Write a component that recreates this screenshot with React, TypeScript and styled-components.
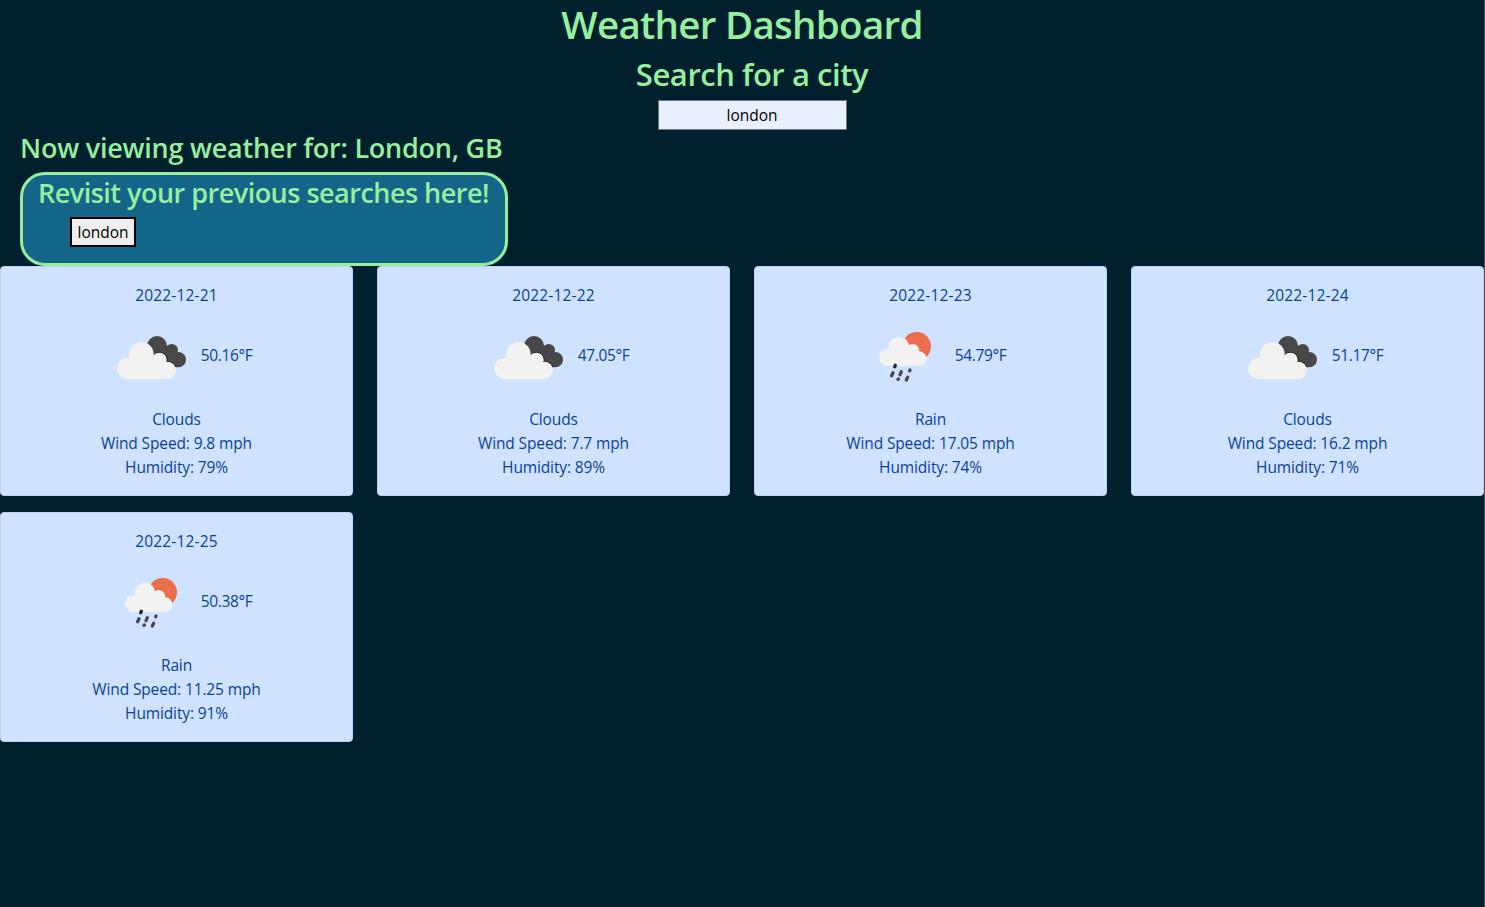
import React from 'react';
import styled, { createGlobalStyle } from 'styled-components';

const GlobalStyle = createGlobalStyle`
  *, *::before, *::after { box-sizing: border-box; }
  body {
    margin: 0;
    background: #00202e;
    font-family: 'Open Sans', 'Noto Sans', sans-serif;
    font-size: 16px;
    line-height: 24px;
  }
`;

const Page = styled.div`
  min-height: 907px;
  border-right: 1px solid #3e525c;
`;

const Title = styled.h1`
  margin: 0 0 7px;
  color: #98ee9f;
  font-size: 38.5px;
  line-height: 48px;
  font-weight: 600;
  text-align: center;
  letter-spacing: -0.72px;
`;

const SearchSection = styled.section`
  height: 75px;
  padding-left: 20px;
  display: flex;
  flex-direction: column;
  align-items: center;
`;

const SearchHeading = styled.h2`
  margin: 0 0 7px;
  color: #98ee9f;
  font-size: 31px;
  line-height: 38px;
  font-weight: 600;
  letter-spacing: -0.45px;
`;

const SearchInput = styled.input`
  width: 189px;
  height: 30px;
  padding: 1px 2px;
  border: 1px solid #767676;
  border-radius: 0;
  background: #e8f0fe;
  color: #000;
  font: inherit;
  font-size: 15.5px;
  text-align: center;
`;

const Summary = styled.section`
  padding-left: 20px;
`;

const SubHeading = styled.h3<{ $tracking: string }>`
  margin: 0 0 6px;
  color: #98ee9f;
  font-size: 27px;
  line-height: 36px;
  font-weight: 600;
  white-space: nowrap;
  letter-spacing: ${(p) => p.$tracking};
`;

const History = styled.div`
  width: 488px;
  height: 94px;
  padding: 0 15px;
  border: 3px solid #98ee9f;
  border-radius: 25px;
  background: #136688;
`;

const HistoryList = styled.div`
  display: flex;
  padding-left: 32px;
`;

const HistoryButton = styled.button`
  width: 66px;
  height: 30px;
  padding: 0;
  border: 2px solid #000;
  background: #efefef;
  color: #000;
  font: inherit;
  font-size: 15.5px;
`;

const Forecast = styled.main`
  display: grid;
  grid-template-columns: repeat(4, 353px);
  gap: 16px 24px;
`;

const Card = styled.article`
  height: 230px;
  padding: 16px;
  border: 1px solid #b6d4fe;
  border-radius: 4px;
  background: #cfe2ff;
  color: #084298;
  font-size: 15.5px;
  text-align: center;
`;

const Conditions = styled.div`
  display: flex;
  align-items: center;
  justify-content: center;
  height: 100px;
`;

const IconFrame = styled.svg`
  width: 100px;
  height: 100px;
  flex: none;
`;

const Temperature = styled.span`
  width: 52px;
  margin-top: -4px;
  white-space: nowrap;
  letter-spacing: -0.36px;
`;

const Line = styled.div<{ $tracking?: string }>`
  letter-spacing: ${(p) => p.$tracking ?? '-0.13px'};
`;

const CloudsIcon = () => (
  <IconFrame viewBox="0 0 100 100" aria-hidden>
    <g transform="translate(9 23) scale(.3333)">
      <g fill="#484848">
        <circle cx="141" cy="48" r="30" />
        <circle cx="185" cy="61" r="19" />
        <circle cx="205" cy="89" r="23" />
        <path d="M120 60 185 45 205 80 203 112 150 112Z" />
      </g>
      <g fill="#f2f2f0" stroke="#282828" strokeWidth="4">
        <circle cx="94" cy="73" r="38" clipPath="url(#overlap)" />
        <circle cx="148" cy="90" r="23" clipPath="url(#overlap)" />
        <circle cx="172" cy="121" r="27" clipPath="url(#overlap)" />
      </g>
      <clipPath id="overlap">
        <path d="M114 0H230V100L200 112 150 112Z" />
      </clipPath>
      <g fill="#f2f2f0">
        <circle cx="53" cy="115" r="32" />
        <circle cx="94" cy="73" r="37" />
        <circle cx="148" cy="90" r="22" />
        <circle cx="172" cy="121" r="26" />
        <path d="M53 90H150L172 110V147H53Z" />
      </g>
    </g>
  </IconFrame>
);

const RainIcon = () => (
  <IconFrame viewBox="0 0 100 100" aria-hidden>
    <g transform="translate(15 18) scale(.3333)">
      <circle cx="140" cy="64" r="43" fill="#ec6e4c" />
      <path
        fill="#f0482a"
        d="M107 42Q116 51 118 58Q139 50 148 78Q164 79 171 92L165 99L140 86L105 70Z"
      />
      <g fill="#f2f2f2">
        <circle cx="53" cy="97" r="26" />
        <circle cx="87" cy="66" r="31" />
        <circle cx="128" cy="77" r="20" />
        <circle cx="148" cy="101" r="22" />
        <path d="M53 76H128L148 100V123H53Z" />
      </g>
      <g stroke="#484848" strokeWidth="10" strokeLinecap="round">
        <path d="M76 121 74 125" stroke="#282828" />
        <path d="M69 143 65 152M94 140 90 149M120 135 119 137M85 162 84 163M113 157 109 165" />
      </g>
    </g>
  </IconFrame>
);

type Day = {
  date: string;
  temp: string;
  sky: 'Clouds' | 'Rain';
  wind: string;
  humidity: string;
};

const days: Day[] = [
  { date: '2022-12-21', temp: '50.16', sky: 'Clouds', wind: '9.8', humidity: '79' },
  { date: '2022-12-22', temp: '47.05', sky: 'Clouds', wind: '7.7', humidity: '89' },
  { date: '2022-12-23', temp: '54.79', sky: 'Rain', wind: '17.05', humidity: '74' },
  { date: '2022-12-24', temp: '51.17', sky: 'Clouds', wind: '16.2', humidity: '71' },
  { date: '2022-12-25', temp: '50.38', sky: 'Rain', wind: '11.25', humidity: '91' },
];

export default function App() {
  return (
    <Page>
      <GlobalStyle />
      <Title>Weather Dashboard</Title>
      <SearchSection>
        <SearchHeading>Search for a city</SearchHeading>
        <SearchInput defaultValue="london" aria-label="City" />
      </SearchSection>
      <Summary>
        <SubHeading $tracking="-0.24px">Now viewing weather for: London, GB</SubHeading>
        <History>
          <SubHeading $tracking="-0.51px">Revisit your previous searches here!</SubHeading>
          <HistoryList>
            <HistoryButton>london</HistoryButton>
          </HistoryList>
        </History>
      </Summary>
      <Forecast>
        {days.map((day) => (
          <Card key={day.date}>
            <Line $tracking="0.15px">{day.date}</Line>
            <Conditions>
              {day.sky === 'Clouds' ? <CloudsIcon /> : <RainIcon />}
              <Temperature>{day.temp}°F</Temperature>
            </Conditions>
            <Line>{day.sky}</Line>
            <Line>Wind Speed: {day.wind} mph</Line>
            <Line>Humidity: {day.humidity}%</Line>
          </Card>
        ))}
      </Forecast>
    </Page>
  );
}
